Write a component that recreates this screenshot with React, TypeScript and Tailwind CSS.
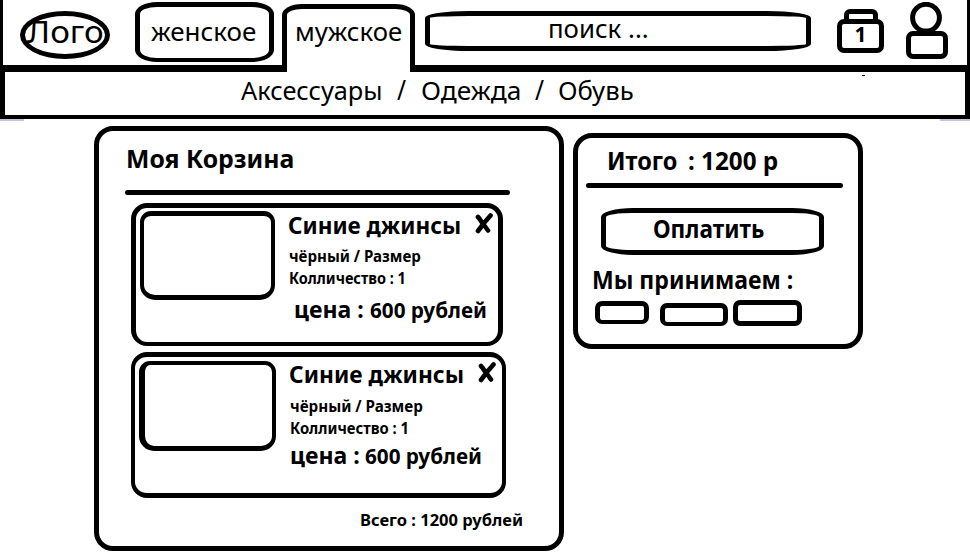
import { useLayoutEffect, useRef } from "react";

type FitProps = { text: string; width: number; className?: string };

// One line of text, stretched or condensed to an exact width.
function Fit({ text, width, className = "" }: FitProps) {
  const inner = useRef<HTMLSpanElement>(null);
  useLayoutEffect(() => {
    const el = inner.current;
    if (el) el.style.transform = `scaleX(${width / el.offsetWidth})`;
  }, [text, width]);
  return (
    <span className={`block shrink-0 whitespace-pre ${className}`} style={{ width }}>
      <span ref={inner} className="inline-block origin-left">{text}</span>
    </span>
  );
}

function Cross({ className }: { className: string }) {
  return (
    <svg viewBox="0 0 18 21" className={`h-[21px] w-[18px] shrink-0 ${className}`} fill="none" stroke="black" strokeWidth="4.6" strokeLinecap="round" strokeLinejoin="round">
      <path d="M3 4C6 7 6 9 9 12L13 17.5M15.5 2.5L9 10L3 18" />
    </svg>
  );
}

function BagIcon() {
  return (
    <div className="ml-[26px] mt-[9px] flex w-[47px] shrink-0 flex-col items-center">
      <div className="h-[13px] w-[34px] rounded-t-[6px] border-[5px] border-b-0 border-black" />
      <div className="-mt-[3px] flex h-[34px] w-[47px] justify-center rounded-[7px] border-[5px] border-black bg-white">
        <Fit text="1" width={12} className="-mt-px text-[21px] leading-[22px] font-bold" />
      </div>
    </div>
  );
}

function PersonIcon() {
  return (
    <svg viewBox="0 0 42 58" className="ml-[22px] mt-[2px] h-[58px] w-[42px] shrink-0" fill="none" stroke="black" strokeWidth="5">
      <circle cx="20" cy="15.7" r="13.4" />
      <rect x="2.5" y="31.5" width="37" height="23" rx="4.5" />
    </svg>
  );
}

function Header() {
  return (
    <header>
      <div className="flex h-[72px] items-start border-x-[3px] border-b-[7px] border-black">
        <div className="ml-[17px] mt-[11px] h-[48px] w-[90px] shrink-0 rounded-[50%] border-[5px] border-black">
          <Fit text="Лого" width={77} className="ml-[2px] -mt-[2px] text-[31px] leading-[34px]" />
        </div>
        <div className="ml-[25px] mt-[2px] h-[60px] w-[139px] shrink-0 rounded-[22px/12px] border-[5px] border-b-4 border-black pl-[11px] pt-[12px]">
          <Fit text="женское" width={105} className="text-[25px] leading-6" />
        </div>
        <div className="ml-[8px] mt-[4px] h-[68px] w-[133px] shrink-0 border-[5px] border-b-0 border-black bg-white pl-[8px] pt-[10px] [border-top-left-radius:20px_11px] [border-top-right-radius:20px_11px]">
          <Fit text="мужское" width={107} className="text-[25px] leading-6" />
        </div>
        <div className="ml-[10px] mt-[11px] h-[40px] w-[386px] shrink-0 rounded-[44px/7px] border-[5px] border-black pl-[118px]">
          <Fit text="поиск ..." width={101} className="text-[25px] leading-6" />
        </div>
        <BagIcon />
        <PersonIcon />
      </div>
      <nav className="flex h-[47px] border-x-[5px] border-b-4 border-black pl-[236px] pt-[6px] text-[25px] leading-6">
        <Fit text="Аксессуары" width={142} />
        <Fit text="/" width={9} className="ml-[14px] text-[27px]" />
        <Fit text="Одежда" width={100} className="ml-[15px]" />
        <Fit text="/" width={9} className="ml-[14px] text-[27px]" />
        <Fit text="Обувь" width={76} className="ml-[14px]" />
        <span className="ml-[228px] -mt-[3px] h-px w-[3px] bg-black" />
      </nav>
      <div className="flex h-[2px] justify-between">
        <span className="w-6 bg-[#c8c3dc]" />
        <span className="w-[30px] bg-[#c8c3dc]" />
      </div>
    </header>
  );
}

function FirstItem() {
  return (
    <article className="ml-[32px] mt-[8px] flex h-[143px] w-[372px] items-start rounded-[16px] border-[5px] border-b-4 border-black">
      <div className="ml-[4px] mt-[3px] h-[89px] w-[135px] shrink-0 rounded-t-[11px] rounded-b-[15px] border-x-4 border-y-[5px] border-black" />
      <div className="ml-[13px] mt-[5px]">
        <div className="flex">
          <Fit text="Синие джинсы" width={173} className="text-[23px] leading-6 font-bold" />
          <Cross className="ml-[14px]" />
        </div>
        <Fit text="чёрный / Размер" width={132} className="mt-[9px] ml-px text-[16px] leading-5 font-bold" />
        <Fit text="Колличество : 1" width={117} className="mt-[2px] ml-px text-[16px] leading-5 font-bold" />
        <div className="ml-[6px] mt-[9px] flex h-6 items-baseline font-bold">
          <Fit text="цена :" width={70} className="text-[24px] leading-6" />
          <Fit text="600 рублей" width={117} className="ml-[6px] text-[20.5px] leading-6" />
        </div>
      </div>
    </article>
  );
}

function SecondItem() {
  return (
    <article className="ml-[32px] mt-[6px] flex h-[146px] w-[375px] items-start rounded-[16px] border-x-4 border-y-[5px] border-black">
      <div className="ml-[4px] mt-[4px] h-[90px] w-[137px] shrink-0 rounded-t-[11px] rounded-b-[15px] border-4 border-b-[5px] border-l-[6px] border-black" />
      <div className="ml-[13px] mt-[5px]">
        <div className="flex">
          <Fit text="Синие джинсы" width={175} className="text-[23px] leading-6 font-bold" />
          <Cross className="ml-[14px]" />
        </div>
        <Fit text="чёрный / Размер" width={133} className="mt-[10px] ml-px text-[16px] leading-5 font-bold" />
        <Fit text="Колличество : 1" width={119} className="mt-[2px] ml-px text-[16px] leading-5 font-bold" />
        <div className="ml-px mt-[5px] flex h-6 items-baseline font-bold">
          <Fit text="цена :" width={70} className="text-[24px] leading-6" />
          <Fit text="600 рублей" width={117} className="ml-[5px] text-[20.5px] leading-6" />
        </div>
      </div>
    </article>
  );
}

function Cart() {
  return (
    <section className="ml-[94px] mt-[5px] h-[425px] w-[470px] shrink-0 rounded-[19px] border-[5px] border-black">
      <Fit text="Моя Корзина" width={168} className="ml-[27px] mt-[16px] text-[24.5px] leading-6 font-bold" />
      <div className="ml-[26px] mt-[19px] h-[5px] w-[385px] rounded-full bg-black" />
      <FirstItem />
      <SecondItem />
      <Fit text="Всего : 1200 рублей" width={163} className="ml-[261px] mt-[12px] text-[16px] leading-5 font-bold" />
    </section>
  );
}

function Total() {
  return (
    <aside className="ml-[9px] mt-[12px] h-[216px] w-[290px] shrink-0 rounded-[19px] border-[5px] border-black font-bold">
      <div className="ml-[29px] mt-[11px] flex text-[24.5px] leading-6">
        <Fit text="Итого" width={70} />
        <Fit text=": 1200 р" width={90} className="ml-[11px]" />
      </div>
      <div className="ml-[8px] mt-[10px] h-[5px] w-[257px] rounded-full bg-black" />
      <div className="ml-[23px] mt-[20px] h-[47px] w-[223px] rounded-[32px/9px] border-[5px] border-black pl-[47px] pt-[4px]">
        <Fit text="Оплатить" width={111} className="text-[24.5px] leading-6" />
      </div>
      <Fit text="Мы принимаем :" width={201} className="ml-[14px] mt-[13px] text-[24.5px] leading-6" />
      <div className="ml-[17px] mt-[8px] flex items-start">
        <div className="mt-px h-[23px] w-[54px] rounded-[7px] border-[5px] border-b-4 border-black" />
        <div className="ml-[11px] mt-[3px] h-[23px] w-[68px] rounded-[7px] border-[5px] border-b-4 border-black" />
        <div className="ml-[5px] h-[26px] w-[69px] rounded-[7px] border-[5px] border-black" />
      </div>
    </aside>
  );
}

export default function App() {
  return (
    <div className="h-[557px] w-[970px] overflow-hidden bg-white font-['Noto_Sans','Open_Sans',sans-serif] text-black">
      <Header />
      <main className="flex items-start">
        <Cart />
        <Total />
      </main>
    </div>
  );
}
